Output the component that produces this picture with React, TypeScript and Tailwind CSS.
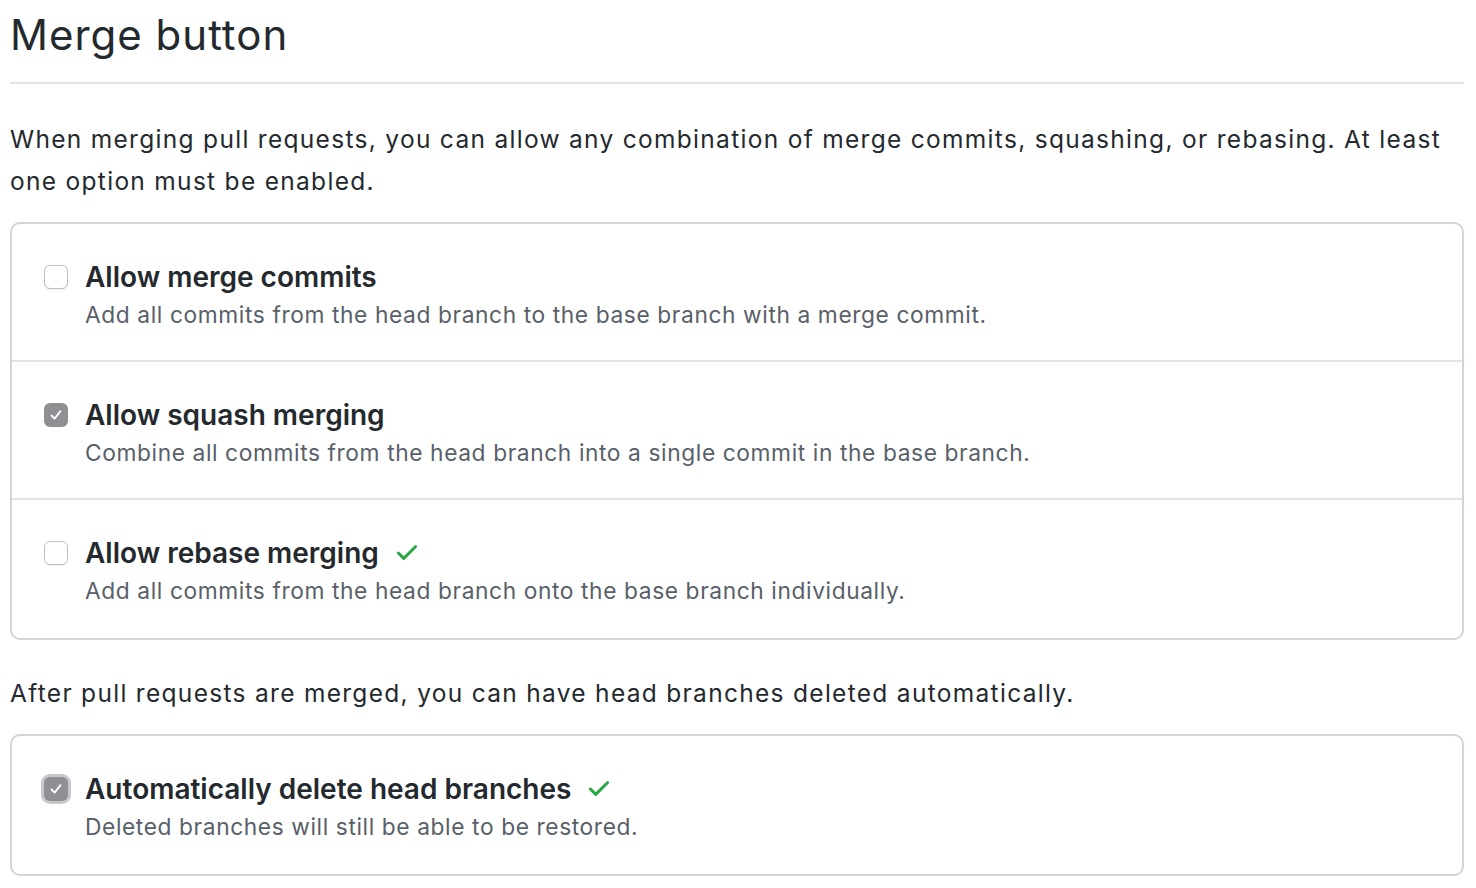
import { Check } from "lucide-react"

type Option = {
  title: string
  desc: string
  checked: boolean
  saved?: boolean
  focused?: boolean
}

const mergeOptions: Option[] = [
  {
    title: "Allow merge commits",
    desc: "Add all commits from the head branch to the base branch with a merge commit.",
    checked: false,
  },
  {
    title: "Allow squash merging",
    desc: "Combine all commits from the head branch into a single commit in the base branch.",
    checked: true,
  },
  {
    title: "Allow rebase merging",
    desc: "Add all commits from the head branch onto the base branch individually.",
    checked: false,
    saved: true,
  },
]

const Checkbox = ({ checked, focused }: { checked: boolean; focused?: boolean }) => {
  if (!checked) {
    return (
      <span className="mt-[6px] block w-[24px] h-[24px] shrink-0 rounded-[6px] border-[1.5px] border-[#bdbdc2] bg-white shadow-[0_1px_1px_rgba(0,0,0,0.06)]" />
    )
  }
  return (
    <span
      className={
        focused
          ? "mt-[6px] flex w-[24px] h-[24px] shrink-0 items-center justify-center rounded-[6px] bg-[#8f8f94] ring-[3px] ring-[#c7c7cc]"
          : "mt-[6px] flex w-[24px] h-[24px] shrink-0 items-center justify-center rounded-[6px] bg-[#8f8f94]"
      }
    >
      <svg width="14" height="14" viewBox="0 0 14 14" fill="none">
        <path d="M2.5 7.5 L5.6 10.6 L11.5 3.2" stroke="white" strokeWidth="1.9" strokeLinecap="round" strokeLinejoin="round" />
      </svg>
    </span>
  )
}

const OptionRow = ({ option, last }: { option: Option; last?: boolean }) => (
  <div
    className={
      last
        ? "flex gap-[17px] pl-[32px] pr-4 pt-[35px] pb-[29px]"
        : "flex gap-[17px] pl-[32px] pr-4 pt-[35px] pb-[27px] border-b-2 border-[#e1e4e8]"
    }
  >
    <Checkbox checked={option.checked} focused={option.focused} />
    <div>
      <div className="flex items-center gap-[15px] text-[28px] leading-[36px] font-semibold text-[#24292e]">
        {option.title}
        {option.saved && <Check className="w-[26px] h-[26px] text-[#28a745]" strokeWidth={2.75} />}
      </div>
      <p className="mt-[2px] text-[22.75px] leading-[36px] tracking-[0.6px] text-[#586069]">{option.desc}</p>
    </div>
  </div>
)

export default function App() {
  return (
    <div className="min-h-screen bg-white font-['Inter','Liberation_Sans',sans-serif]">
      <div className="pl-[10px] pr-[12px]">
        <h2 className="pt-[8px] pb-[20px] text-[42px] leading-[54px] tracking-[1px] font-normal text-[#24292e] border-b-2 border-[#e1e4e8]">
          Merge button
        </h2>

        <p className="mt-[34px] text-[24.5px] leading-[42px] tracking-[1.3px] text-[#24292e]">
          When merging pull requests, you can allow any combination of merge commits, squashing, or rebasing. At least one option must be enabled.
        </p>

        <div className="mt-[20px] rounded-[10px] border-2 border-[#d1d5da]">
          {mergeOptions.map((option, i) => (
            <OptionRow key={option.title} option={option} last={i === mergeOptions.length - 1} />
          ))}
        </div>

        <p className="mt-[32px] text-[24.5px] leading-[42px] tracking-[1.3px] text-[#24292e]">
          After pull requests are merged, you can have head branches deleted automatically.
        </p>

        <div className="mt-[20px] rounded-[10px] border-2 border-[#d1d5da]">
          <OptionRow
            last
            option={{
              title: "Automatically delete head branches",
              desc: "Deleted branches will still be able to be restored.",
              checked: true,
              saved: true,
              focused: true,
            }}
          />
        </div>
      </div>
    </div>
  )
}
